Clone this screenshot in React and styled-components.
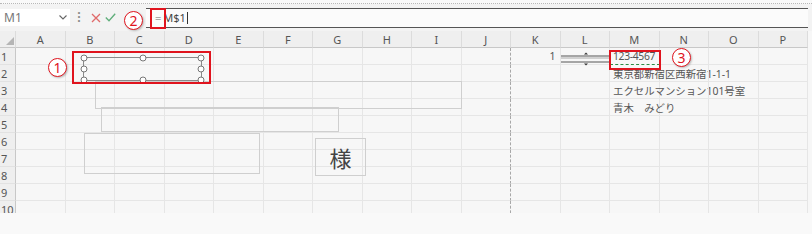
import React from "react";
import styled, { createGlobalStyle } from "styled-components";

const Global = createGlobalStyle`
  html, body {
    margin: 0;
    padding: 0;
    background: #f9f9f9;
    font-family: "Noto Sans", "Noto Sans CJK JP", sans-serif;
  }
`;

const COLS = "ABCDEFGHIJKLMNOP".split("");
const ROWS = [1, 2, 3, 4, 5, 6, 7, 8, 9, 10];

const cells = {
  K1: { text: "1", align: "right" },
  M1: { text: "123-4567", marquee: true },
  M2: { text: "東京都新宿区西新宿1-1-1" },
  M3: { text: "エクセルマンション101号室" },
  M4: { text: "青木　みどり" },
};

const Page = styled.div`
  width: 812px;
  height: 234px;
  overflow: hidden;
  background: #f9f9f9;
`;

const TopEdge = styled.div`
  height: 3px;
  border-bottom: 1px dotted #b8b8b8;
`;

const Toolbar = styled.div`
  height: 27px;
  display: flex;
  align-items: center;
  background: #f3f3f3;
  position: relative;
`;

const NameBox = styled.div`
  width: 70px;
  height: 17px;
  background: #fff;
  display: flex;
  align-items: center;
  justify-content: space-between;
  padding: 0 3px 0 4px;
  box-sizing: border-box;
  color: #777;
  font-size: 12px;
`;

const Dots = styled.div`
  width: 18px;
  text-align: center;
  color: #888;
  font-size: 12px;
  font-weight: bold;
`;

const ActionBtn = styled.div`
  width: 15px;
  display: flex;
  justify-content: center;
`;

const Formula = styled.div`
  flex: 1;
  height: 18px;
  margin-left: 28px;
  border-top: 1.5px solid #555;
  border-bottom: 1.5px solid #555;
  background: #fbfbfb;
  display: flex;
  align-items: center;
  padding-left: 9px;
  font-size: 11px;
  color: #444;
  margin-right: 4px;
`;

const Eq = styled.span`
  color: #aaa;
  margin-right: 2px;
`;

const Caret = styled.span`
  display: inline-block;
  width: 1px;
  height: 12px;
  background: #333;
  margin-left: 1px;
`;

const Sheet = styled.div`
  position: relative;
  height: 182px;
  overflow: hidden;
  display: grid;
  grid-template-columns: 16px repeat(16, 49.5px);
  grid-auto-rows: 17px;
  background: #f7f7f7;
`;

const ColHead = styled.div`
  background: #efefef;
  border-right: 1px solid #dcdcdc;
  border-bottom: 1px solid #c8c8c8;
  box-sizing: border-box;
  display: flex;
  align-items: center;
  justify-content: center;
  font-size: 11px;
  color: #555;
`;

const Corner = styled(ColHead)`
  justify-content: flex-end;
  align-items: flex-end;
  padding: 0 1px 2px 0;
`;

const RowHead = styled.div`
  background: #efefef;
  border-right: 1px solid #c8c8c8;
  border-bottom: 1px solid #e2e2e2;
  box-sizing: border-box;
  font-size: 11px;
  color: #555;
  display: flex;
  align-items: center;
  padding-left: 1px;
`;

const Cell = styled.div`
  border-right: 1px ${(p) => (p.$break ? "dashed #a8a8a8" : "solid #e6e6e6")};
  border-bottom: 1px ${(p) => (p.$marquee ? "dashed #2e8b45" : "solid #e6e6e6")};
  box-sizing: border-box;
  display: flex;
  align-items: center;
  justify-content: ${(p) => (p.$align === "right" ? "flex-end" : "flex-start")};
  padding: 0 4px 0 3px;
  font-size: 10.4px;
  letter-spacing: ${(p) => (p.$marquee ? "-0.35px" : "0")};
  color: #555;
  white-space: nowrap;
  overflow: visible;
  min-width: 0;
`;

const Shape = styled.div`
  position: absolute;
  left: ${(p) => p.$x}px;
  top: ${(p) => p.$y}px;
  width: ${(p) => p.$w}px;
  height: ${(p) => p.$h}px;
  border: 1px solid ${(p) => p.$border || "#cfcfcf"};
  box-sizing: border-box;
  display: flex;
  align-items: center;
  justify-content: center;
`;

const Sama = styled.span`
  font-family: "Noto Sans CJK JP", sans-serif;
  font-size: 22px;
  color: #444;
`;

const Handle = styled.div`
  position: absolute;
  width: 7px;
  height: 7px;
  border: 1.3px solid #777;
  background: #fff;
  border-radius: 50%;
  left: ${(p) => p.$x}%;
  top: ${(p) => p.$y}%;
  transform: translate(-50%, -50%);
  box-sizing: border-box;
`;

const RedBox = styled.div`
  position: absolute;
  left: ${(p) => p.$x}px;
  top: ${(p) => p.$y}px;
  width: ${(p) => p.$w}px;
  height: ${(p) => p.$h}px;
  border: 2.5px solid #e0141e;
  box-sizing: border-box;
`;

const Badge = styled.div`
  position: absolute;
  left: ${(p) => p.$x - 9}px;
  top: ${(p) => p.$y - 9}px;
  width: 19px;
  height: 19px;
  border: 1.3px solid #e0141e;
  border-radius: 50%;
  background: #fff;
  box-shadow: 1px 1px 2px rgba(0, 0, 0, 0.25);
  color: #e0141e;
  font-size: 14px;
  line-height: 1;
  display: flex;
  align-items: center;
  justify-content: center;
  box-sizing: border-box;
  z-index: 3;
`;

const Spin = styled.svg`
  position: absolute;
  left: 561px;
  top: 20px;
`;

function SpinButton() {
  return (
    <Spin width="48" height="16" viewBox="0 0 48 16">
      <line x1="0" y1="5" x2="48" y2="5" stroke="#555" strokeWidth="1" />
      <line x1="0" y1="7" x2="48" y2="7" stroke="#aaa" strokeWidth="1" />
      <line x1="0" y1="11" x2="48" y2="11" stroke="#555" strokeWidth="1" />
      <path d="M23 3.5 L25 1.5 L27 3.5 Z" fill="#333" />
      <path d="M23 12.5 L25 14.5 L27 12.5 Z" fill="#333" />
    </Spin>
  );
}

export default function App() {
  return (
    <Page>
      <Global />
      <TopEdge />
      <Toolbar>
        <NameBox>
          <span>M1</span>
          <svg width="8" height="5" viewBox="0 0 8 5">
            <path d="M0.5 0.5 L4 4 L7.5 0.5" fill="none" stroke="#666" strokeWidth="1.1" />
          </svg>
        </NameBox>
        <Dots>⁝</Dots>
        <ActionBtn>
          <svg width="10" height="10" viewBox="0 0 10 10">
            <path d="M1 1 L9 9 M9 1 L1 9" stroke="#e06a6a" strokeWidth="1.3" />
          </svg>
        </ActionBtn>
        <ActionBtn>
          <svg width="11" height="9" viewBox="0 0 11 9">
            <path d="M0.8 4.5 L4 7.8 L10.2 0.8" fill="none" stroke="#5fae7a" strokeWidth="1.3" />
          </svg>
        </ActionBtn>
        <Formula>
          <Eq>=</Eq>M$1<Caret />
        </Formula>
        <RedBox $x={150} $y={4} $w={16} $h={21} />
        <Badge $x={133} $y={16}>2</Badge>
      </Toolbar>
      <Sheet>
        <Corner>
          <svg width="8" height="8" viewBox="0 0 8 8">
            <path d="M8 0 L8 8 L0 8 Z" fill="#b5b5b5" />
          </svg>
        </Corner>
        {COLS.map((c) => (
          <ColHead key={c}>{c}</ColHead>
        ))}
        {ROWS.map((r) => (
          <React.Fragment key={r}>
            <RowHead>{r}</RowHead>
            {COLS.map((c) => {
              const data = cells[c + r] || {};
              return (
                <Cell
                  key={c + r}
                  $break={c === "J"}
                  $align={data.align}
                  $marquee={data.marquee}
                >
                  {data.text}
                </Cell>
              );
            })}
          </React.Fragment>
        ))}

        <Shape $x={95} $y={50} $w={367} $h={28} />
        <Shape $x={101} $y={76} $w={238} $h={25} />
        <Shape $x={84} $y={102} $w={176} $h={41} />
        <Shape $x={315} $y={107} $w={51} $h={38}>
          <Sama>様</Sama>
        </Shape>

        <Shape $x={83} $y={26} $w={119} $h={24} $border="#8a8a8a">
          <Handle $x={0} $y={0} />
          <Handle $x={50} $y={0} />
          <Handle $x={100} $y={0} />
          <Handle $x={0} $y={50} />
          <Handle $x={100} $y={50} />
          <Handle $x={0} $y={100} />
          <Handle $x={50} $y={100} />
          <Handle $x={100} $y={100} />
        </Shape>
        <RedBox $x={72} $y={20} $w={139} $h={33} />
        <Badge $x={57} $y={36}>1</Badge>

        <SpinButton />
        <RedBox $x={609} $y={19} $w={52} $h={20} />
        <Badge $x={681} $y={26}>3</Badge>
      </Sheet>
    </Page>
  );
}
